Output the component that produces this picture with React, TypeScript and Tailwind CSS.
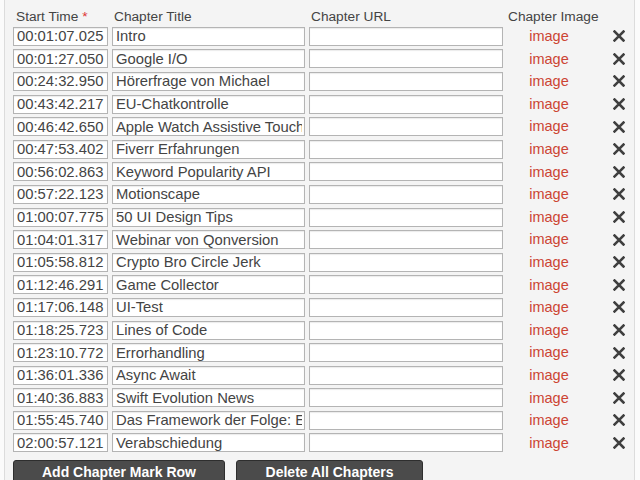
import React from 'react'

const chapters: [string, string][] = [
  ['00:01:07.025', 'Intro'],
  ['00:01:27.050', 'Google I/O'],
  ['00:24:32.950', 'Hörerfrage von Michael'],
  ['00:43:42.217', 'EU-Chatkontrolle'],
  ['00:46:42.650', 'Apple Watch Assistive Touch'],
  ['00:47:53.402', 'Fiverr Erfahrungen'],
  ['00:56:02.863', 'Keyword Popularity API'],
  ['00:57:22.123', 'Motionscape'],
  ['01:00:07.775', '50 UI Design Tips'],
  ['01:04:01.317', 'Webinar von Qonversion'],
  ['01:05:58.812', 'Crypto Bro Circle Jerk'],
  ['01:12:46.291', 'Game Collector'],
  ['01:17:06.148', 'UI-Test'],
  ['01:18:25.723', 'Lines of Code'],
  ['01:23:10.772', 'Errorhandling'],
  ['01:36:01.336', 'Async Await'],
  ['01:40:36.883', 'Swift Evolution News'],
  ['01:55:45.740', 'Das Framework der Folge: Extensions'],
  ['02:00:57.121', 'Verabschiedung'],
]

const inputCls =
  'h-[19px] border border-[#b4b4b4] bg-white pl-[3px] pr-[2px] text-[14.8px] leading-none text-[#444] outline-none shadow-[inset_0_1px_1px_rgba(0,0,0,0.08)]'

function Cross() {
  return (
    <svg width="12" height="12" viewBox="0 0 12 12" className="text-[#3f3f3f]">
      <path d="M1.5 1.5 L10.5 10.5 M10.5 1.5 L1.5 10.5" stroke="currentColor" strokeWidth="2.5" strokeLinecap="square" />
    </svg>
  )
}

export default function App() {
  return (
    <div
      className="h-[480px] w-[640px] overflow-hidden bg-[#fbfbfb]"
      style={{ fontFamily: '"Liberation Sans", Arial, sans-serif' }}
    >
      <div className="ml-[4px] h-full w-[631px] border-x border-[#dcdcdc] bg-[#f4f4f4] pl-[8px]">
        {/* header */}
        <div className="flex h-[25px] items-end text-[13.7px] text-[#444]">
          <div className="w-[99px] pl-[3px] leading-[17px]">
            Start Time <span className="text-[#d33]">*</span>
          </div>
          <div className="w-[197px] pl-[2px] leading-[17px]">Chapter Title</div>
          <div className="w-[198px] pl-[2px] leading-[17px]">Chapter URL</div>
          <div className="pl-[1px] leading-[17px]">Chapter Image</div>
        </div>

        {/* rows */}
        {chapters.map(([time, title]) => (
          <div key={time} className="flex h-[22.6px] items-center">
            <input readOnly value={time} className={`${inputCls} w-[95px]`} />
            <input readOnly value={title} className={`${inputCls} ml-[4px] w-[193px]`} />
            <input readOnly value="" className={`${inputCls} ml-[4px] w-[194px]`} />
            <div className="w-[92px] text-center text-[14.5px] leading-none text-[#cc4433]">image</div>
            <div className="ml-[18px] flex w-[12px] items-center">
              <Cross />
            </div>
          </div>
        ))}

        {/* actions */}
        <div className="mt-[6px] flex gap-[11px]">
          <button className="h-[24px] w-[212px] rounded-[3px] border border-[#2e2e2e] bg-[#4b4b4b] text-[14px] font-bold text-white">
            Add Chapter Mark Row
          </button>
          <button className="h-[24px] w-[187px] rounded-[3px] border border-[#2e2e2e] bg-[#4b4b4b] text-[14px] font-bold text-white">
            Delete All Chapters
          </button>
        </div>
      </div>
    </div>
  )
}
